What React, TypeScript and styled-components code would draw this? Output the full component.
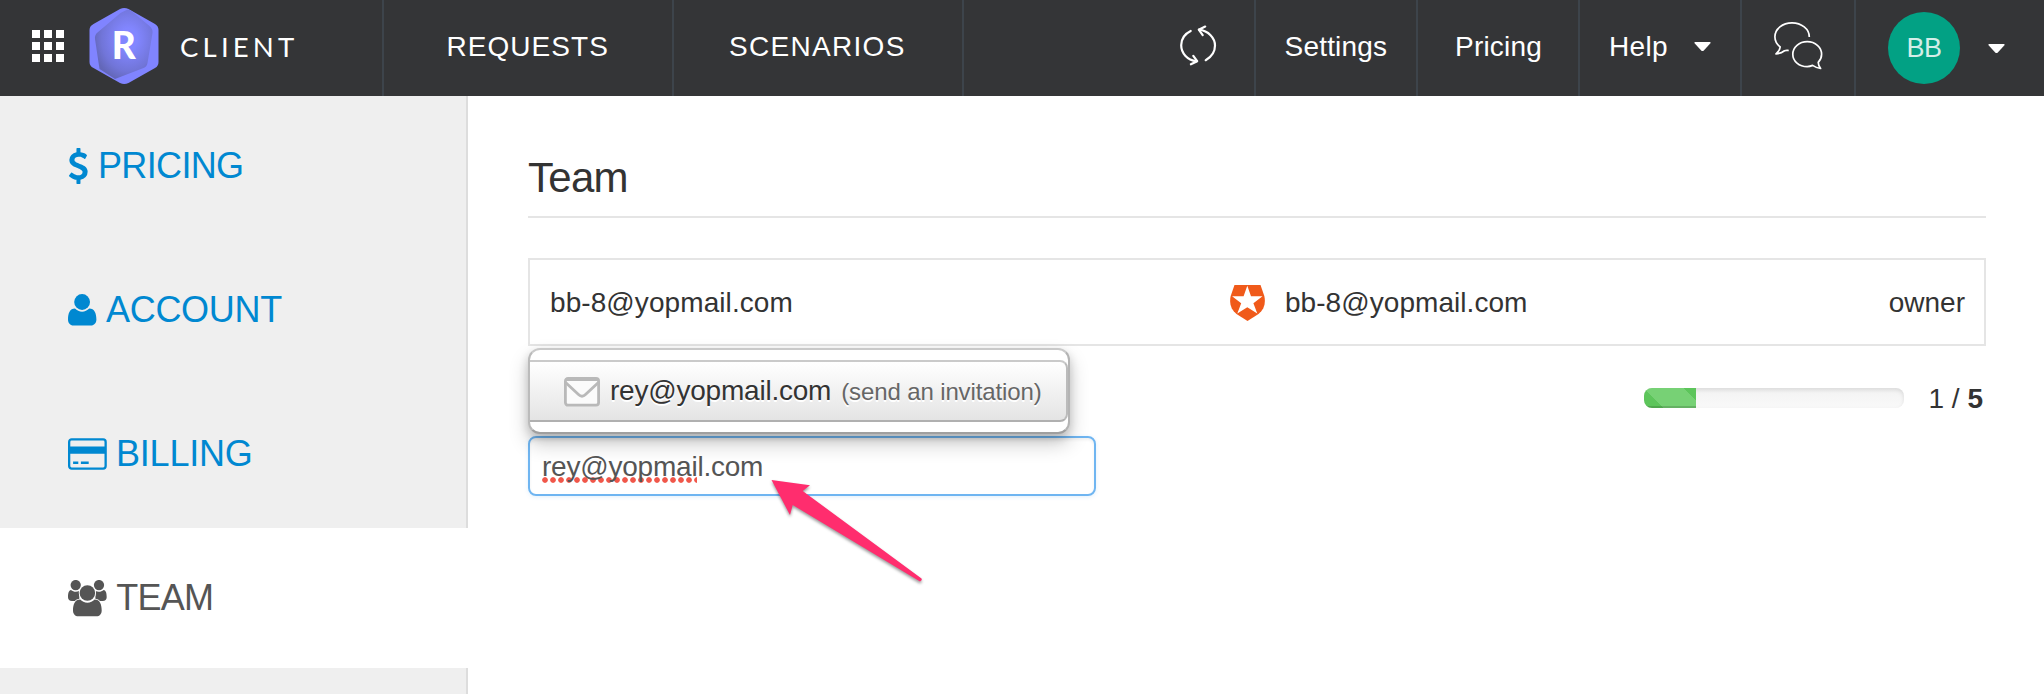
import React from "react";
import styled, { createGlobalStyle } from "styled-components";

const GlobalStyle = createGlobalStyle`
  * { box-sizing: border-box; }
  html, body { margin: 0; padding: 0; }
  body {
    width: 2044px;
    height: 694px;
    overflow: hidden;
    background: #fff;
    color: #333;
    font-family: "Liberation Sans", Arial, sans-serif;
    font-size: 28px;
  }
`;

const Page = styled.div`
  display: flex;
  flex-direction: column;
  height: 694px;
`;

/* ---------- top bar ---------- */

const TopBar = styled.header`
  display: flex;
  flex: 0 0 96px;
  background: #343537;
  color: #fff;
`;

const Cell = styled.div<{ $width: number; $pad?: number; $last?: boolean }>`
  display: flex;
  align-items: center;
  width: ${(p) => p.$width}px;
  padding-left: ${(p) => p.$pad ?? 0}px;
  padding-bottom: 4px;
  border-right: ${(p) => (p.$last ? "none" : "2px solid #3d444b")};
  line-height: 32px;
  white-space: nowrap;
`;

const Spacer = styled.div`
  flex: 1;
`;

const AppGrid = styled.div`
  display: grid;
  grid-template-columns: repeat(3, 8px);
  grid-auto-rows: 8px;
  gap: 4px;
`;

const Dot = styled.span`
  background: #fff;
`;

const Logo = styled.svg`
  display: block;
  margin-left: 25px;
`;

const Brand = styled.span`
  margin: 2px 0 0 21px;
  font-family: Lato, sans-serif;
  font-size: 27.5px;
  letter-spacing: 4.2px;
`;

const NavText = styled.span<{ $spacing: number }>`
  margin-top: 2px;
  letter-spacing: ${(p) => p.$spacing}px;
`;

const Icon = styled.svg`
  display: block;
  flex: none;
`;

const HelpCaret = styled(Icon)`
  margin-left: 26px;
`;

const UserCaret = styled(Icon)`
  margin: 5px 0 0 28px;
`;

const Avatar = styled.div`
  display: flex;
  align-items: center;
  justify-content: center;
  width: 72px;
  height: 72px;
  margin-top: 4px;
  border-radius: 50%;
  background: #02a184;
  color: #d3eee8;
  font-size: 27px;
  letter-spacing: -0.5px;
`;

/* ---------- side menu ---------- */

const Body = styled.div`
  display: flex;
  flex: 1;
`;

const Sidebar = styled.nav`
  display: flex;
  flex: 0 0 468px;
  flex-direction: column;
  gap: 4px;
  background: linear-gradient(90deg, #efefef 466px, #ddd 466px);
`;

const MenuItem = styled.a<{ $active?: boolean; $spacing: number }>`
  display: flex;
  flex: 0 0 140px;
  align-items: center;
  gap: 9.5px;
  padding-left: 68px;
  background: ${(p) => (p.$active ? "#fff" : "transparent")};
  color: ${(p) => (p.$active ? "#555" : "#0088d1")};
  font-size: 36px;
  letter-spacing: ${(p) => p.$spacing}px;
  line-height: 40px;
`;

/* ---------- content ---------- */

const Content = styled.main`
  flex: 1;
  padding: 56px 58px 0 60px;
`;

const Title = styled.h1`
  height: 66px;
  margin: 0 0 40px;
  border-bottom: 2px solid #e5e5e5;
  font-size: 42px;
  font-weight: 400;
  letter-spacing: -0.7px;
  line-height: 52px;
`;

const MemberRow = styled.div`
  display: flex;
  align-items: center;
  height: 88px;
  padding: 2px 19px 0 20px;
  border: 2px solid #e5e5e5;
`;

const MemberMail = styled.span`
  width: 680px;
  letter-spacing: 0.08px;
`;

const MemberAccount = styled.span`
  display: flex;
  flex: 1;
  align-items: center;
  gap: 20px;
  letter-spacing: 0.05px;
`;

const BelowRow = styled.div`
  display: flex;
  align-items: flex-start;
  justify-content: space-between;
  padding-top: 2px;
`;

const InviteColumn = styled.div`
  position: relative;
  display: flex;
  flex-direction: column;
  gap: 2px;
  width: 568px;
`;

const Suggestions = styled.div`
  z-index: 1;
  width: 542px;
  height: 86px;
  padding: 10px 0;
  border: 2px solid;
  border-color: #c9c9c9 #b4b4b4 #9f9f9f #bbb;
  border-radius: 12px;
  background: #fff;
  box-shadow: 0 10px 20px rgba(0, 0, 0, 0.2), 0 4px 10px rgba(0, 0, 0, 0.16);
`;

const Suggestion = styled.div`
  display: flex;
  align-items: center;
  height: 62px;
  padding: 1px 0 0 34px;
  border: 2px solid;
  border-color: #cacaca #bbb #b0b0b0;
  border-left: 0;
  border-radius: 0 8px 8px 0;
  background: linear-gradient(#fff, #e4e4e4);
  text-shadow: 0 2px 0 #fff;
  letter-spacing: -0.22px;
  white-space: nowrap;
`;

const SuggestedMail = styled.span`
  margin: -1px 10px 0 10px;
`;

const Hint = styled.small`
  margin-top: 1px;
  color: #666;
  font-size: 24px;
  letter-spacing: -0.12px;
`;

const MailField = styled.div`
  display: flex;
  align-items: center;
  height: 60px;
  padding: 1px 0 0 12px;
  border: 2px solid #6fb5f1;
  border-radius: 8px;
  box-shadow: inset 0 2px 3px rgba(0, 0, 0, 0.06), 0 1px 4px rgba(110, 180, 240, 0.2);
  color: #555;
  letter-spacing: -0.22px;
`;

const Misspelled = styled.span`
  background: radial-gradient(circle at 3px 3px, #f0574a 2.4px, rgba(255, 100, 90, 0) 3.2px) left bottom / 8px 6px repeat-x;
`;

const Pointer = styled.svg`
  position: absolute;
  z-index: 2;
  left: 236px;
  top: 124px;
`;

const Seats = styled.div`
  display: flex;
  align-items: center;
  gap: 25px;
  padding: 29px 3px 0 0;
`;

const Meter = styled.div`
  width: 260px;
  height: 20px;
  margin-top: 4px;
  overflow: hidden;
  border-radius: 8px;
  background: linear-gradient(#f3f3f3, #f9f9f9);
  box-shadow: inset 0 2px 4px rgba(0, 0, 0, 0.11);
`;

const MeterFill = styled.div`
  height: 20px;
  background: linear-gradient(45deg, #5dc55b 13.5px, #77d175 13.5px, #77d175 42px, #5dc55b 42px);
  box-shadow: inset 0 -2px 0 rgba(0, 0, 0, 0.15);
`;

const Count = styled.span`
  margin-top: 6px;
  line-height: 32px;
`;

/* ---------- drawings ---------- */

const LogoMark = () => (
  <Logo width="70" height="78" viewBox="88.5 7 70 78">
    <defs>
      <radialGradient id="gem" cx="0.58" cy="0.42" r="0.62">
        <stop offset="0.25" stopColor="#8286ff" />
        <stop offset="0.75" stopColor="#7175d8" />
        <stop offset="1" stopColor="#6367b8" />
      </radialGradient>
    </defs>
    <path
      d="M119.5 9Q123.7 6.8 128 9L154.500 24Q158 26 158 30V62Q158 66 154.500 68L128 83Q123.700 85.200 119.500 83L93 68Q89 66 89 62V30Q89 26 93 24Z"
      fill="#8084ff"
    />
    <path
      d="M125 10.500Q128 9 131 11L149 26Q152.500 29 152 33L147 63Q146.300 67 143 68L114.500 79L99 69L94.500 39Q94 35 97 32.500L120 13Z"
      fill="url(#gem)"
    />
    <text x="111.300" y="59.300" fill="#fff" fontFamily="Lato, sans-serif" fontSize="37" fontWeight="900">
      R
    </text>
  </Logo>
);

const Refresh = () => (
  <Icon width="38" height="42" viewBox="0 0 38 42" fill="none" stroke="#fff" strokeWidth="2.200" strokeLinecap="round" strokeLinejoin="round">
    <path d="M10.700 6C4.500 9 1.200 14.500 1.200 20.300C1.200 28 7 35 16.500 36.200" />
    <path d="M13.300 30.800L17.200 36.200L10.900 39.300" />
    <path d="M25.700 35.200C31.500 32 35 26.500 35 20.600C35 13 28.500 5.800 19 4.700" />
    <path d="M22.700 10.200L18.800 4.700L25.200 1.600" />
  </Icon>
);

const Chats = () => (
  <Icon width="50" height="49" viewBox="0 0 50 49" fill="none" stroke="#fff" strokeWidth="1.700" strokeLinejoin="round">
    <path d="M35.300 15C35.300 7 27.500 0.900 18 0.900S0.900 7 0.900 14.800C0.900 19 2.800 22.300 6.200 25C6 28 4.500 29.800 2 31.900C6 31.600 8.500 30.300 10.500 28.800C12 28.300 13 28.600 14.700 28.300" />
    <path d="M44.200 40.300C46.400 38.100 47.600 35.300 47.600 32.200C47.600 25.100 41.200 19.700 33.200 19.700S18.800 25.100 18.800 32.200S25.200 44.600 33.200 44.600C35.200 44.600 36.800 44.200 38.600 43.400C41 45 43.500 46 46.600 46.500C45 44.300 44.200 42.600 44.200 40.300Z" />
  </Icon>
);

const CaretShape = () => (
  <path d="M1.200 0H15.800Q17.200 0.300 16.200 1.600L9.800 8.400Q8.500 9.600 7.200 8.400L0.800 1.600Q-0.200 0.300 1.200 0Z" fill="#fff" />
);

const Dollar = () => (
  <Icon width="20.500" height="36" viewBox="384 0 1020 1792" fill="currentColor">
    <path d="M1362 1185q0 153-99.500 263.500t-258.500 136.500v175q0 14-9 23t-23 9h-135q-13 0-22.500-9.500t-9.500-22.500v-175q-66-9-127.500-31t-101.500-44.500-74-48-46.500-37.500-17.500-18q-17-21-2-41l103-135q7-10 23-12 15-2 24 9l2 2q113 99 243 125 37 8 74 8 81 0 142.500-43t61.500-122q0-28-15-53t-33.500-42-58.500-37.500-66-32-80-32.500q-39-16-61.500-25t-61.500-26.500-62.500-31-56.500-35.500-53.500-42.500-43.500-49-35.500-58-21-66.500-8.500-78q0-138 98-242t255-134v-180q0-13 9.500-22.500t22.500-9.500h135q14 0 23 9t9 23v176q57 6 110.500 23t87 33.500 63.500 37.500 39 29 15 14q17 18 5 38l-81 146q-8 15-23 16-14 3-27-7-3-3-14.500-12t-39-26.500-58.500-32-74.500-26-85.500-11.500q-95 0-155 43t-60 111q0 26 8.500 48t29.500 41.500 39.500 33 56 31 60.500 27 70 27.500q53 20 81 31.500t76 35 75.500 42.500 62 50 53 63.500 31.500 76.500 13 94z" />
  </Icon>
);

const Person = () => (
  <Icon width="28.500" height="32" viewBox="0 0 28.500 32" fill="currentColor">
    <circle cx="14.100" cy="8" r="7.900" />
    <path d="M7 14.600C8.800 16.700 11.500 17.700 14.100 17.700S19.400 16.700 21.200 14.600C26.500 14.600 28.400 19.500 28.400 25.500C28.400 29 26 31.500 23 31.500H5.300C2.300 31.500 0 29 0 25.500C0 19.500 1.800 14.600 7 14.600Z" />
  </Icon>
);

const Card = () => (
  <Icon width="38.600" height="32" viewBox="0 0 38.600 32" fill="currentColor">
    <rect x="1.150" y="1.400" width="36.500" height="29.200" rx="2.500" fill="none" stroke="currentColor" strokeWidth="2.300" />
    <path d="M1 8.500H38V15.800H1ZM5.100 23.500H10.300V26H5.100ZM12.900 23.500H20.700V26H12.900Z" />
  </Icon>
);

const People = () => (
  <Icon width="38.800" height="37" viewBox="0 0 38.800 37" fill="currentColor">
    <circle cx="7.700" cy="5.100" r="5.150" />
    <circle cx="31" cy="5.100" r="5.150" />
    <path d="M3 10C4.500 11.200 6 11.800 7.800 11.800C9 11.800 10 11.600 11.300 11V21H4C1.500 21 0 19.600 0 17.200C0 13.500 0.700 10.200 3 10Z" />
    <path d="M35.700 10C34.200 11.200 32.700 11.800 30.900 11.800C29.700 11.800 28.700 11.600 27.400 11V21H34.700C37.200 21 38.700 19.600 38.700 17.200C38.700 13.500 38 10.200 35.700 10Z" />
    <g stroke="#fff" strokeWidth="1.800" paintOrder="stroke">
      <path d="M12.200 19.600C14 21.600 16.500 22.700 19.400 22.700S24.800 21.600 26.600 19.600C31.800 19.600 33.700 24.500 33.700 30.500C33.700 34 31.500 36.300 28.500 36.300H10.300C7.300 36.300 5 34 5 30.500C5 24.500 7 19.600 12.200 19.600Z" />
      <circle cx="19.400" cy="12.900" r="7.750" />
    </g>
  </Icon>
);

const Shield = () => (
  <Icon width="35" height="36" viewBox="0 0 35 36">
    <path d="M4.500 0H30.500L34.300 11C36 18.500 34 24.500 28.500 29L17.500 36L6.500 29C1 24.500 -1 18.500 0.700 11Z" fill="#f05a1a" />
    <path d="M17.300 0.800L21 11.200H32.500L23.400 18.200L27.300 28.600L17.300 22.300L7.300 28.600L11.200 18.200L2.100 11.200H13.600Z" fill="#fff" />
  </Icon>
);

const Envelope = () => (
  <Icon width="36" height="30" viewBox="0 0 36 30" fill="none" stroke="#b9b9b9" strokeWidth="2.800">
    <rect x="1.400" y="1.400" width="33.200" height="26.800" rx="2.600" fill="#fbfbfb" />
    <path d="M1.600 5.500L14.500 17.500Q18 21 21.500 17.500L34.400 5.500" />
    <path d="M1.600 2.600H34.400" strokeWidth="3" />
  </Icon>
);

const members = [{ mail: "bb-8@yopmail.com", account: "bb-8@yopmail.com", role: "owner" }];
const seatsUsed = 1;
const seatsTotal = 5;

export default function App() {
  return (
    <Page>
      <GlobalStyle />
      <TopBar>
        <Cell $width={384} $pad={32}>
          <AppGrid>
            {Array.from({ length: 9 }, (_, i) => (
              <Dot key={i} />
            ))}
          </AppGrid>
          <LogoMark />
          <Brand>CLIENT</Brand>
        </Cell>
        <Cell $width={290} $pad={62.5}>
          <NavText $spacing={1.05}>REQUESTS</NavText>
        </Cell>
        <Cell $width={290} $pad={55}>
          <NavText $spacing={1.3}>SCENARIOS</NavText>
        </Cell>
        <Spacer />
        <Cell $width={76}>
          <Refresh />
        </Cell>
        <Cell $width={162} $pad={28.5}>
          <NavText $spacing={0.2}>Settings</NavText>
        </Cell>
        <Cell $width={162} $pad={37}>
          <NavText $spacing={0.2}>Pricing</NavText>
        </Cell>
        <Cell $width={162} $pad={29}>
          <NavText $spacing={0.3}>Help</NavText>
          <HelpCaret width="17" height="9" viewBox="0 0 17 9">
            <CaretShape />
          </HelpCaret>
        </Cell>
        <Cell $width={114} $pad={32}>
          <Chats />
        </Cell>
        <Cell $width={188} $pad={32} $last>
          <Avatar>BB</Avatar>
          <UserCaret width="17" height="9" viewBox="0 0 17 9">
            <CaretShape />
          </UserCaret>
        </Cell>
      </TopBar>
      <Body>
        <Sidebar>
          <MenuItem $spacing={-0.65}>
            <Dollar />
            PRICING
          </MenuItem>
          <MenuItem $spacing={-0.3}>
            <Person />
            ACCOUNT
          </MenuItem>
          <MenuItem $spacing={-0.25}>
            <Card />
            BILLING
          </MenuItem>
          <MenuItem $spacing={-0.8} $active>
            <People />
            TEAM
          </MenuItem>
        </Sidebar>
        <Content>
          <Title>Team</Title>
          {members.map((m) => (
            <MemberRow key={m.mail}>
              <MemberMail>{m.mail}</MemberMail>
              <MemberAccount>
                <Shield />
                {m.account}
              </MemberAccount>
              <span>{m.role}</span>
            </MemberRow>
          ))}
          <BelowRow>
            <InviteColumn>
              <Suggestions>
                <Suggestion>
                  <Envelope />
                  <SuggestedMail>rey@yopmail.com</SuggestedMail>
                  <Hint>(send an invitation)</Hint>
                </Suggestion>
              </Suggestions>
              <MailField>
                <Misspelled>rey@yopmai</Misspelled>
                <span>l.com</span>
              </MailField>
              <Pointer width="170" height="120" viewBox="764 472 170 120">
                <path
                  d="M771.500 480L810 485.300L802.700 491L921.500 578.500Q922.500 580.500 920 581.500L792.700 505L790 515Z"
                  fill="#ff2d6e"
                  filter="drop-shadow(0 2px 1.500px rgba(0,0,0,0.4))"
                />
              </Pointer>
            </InviteColumn>
            <Seats>
              <Meter>
                <MeterFill style={{ width: `${(seatsUsed / seatsTotal) * 100}%` }} />
              </Meter>
              <Count>
                {seatsUsed} / <b>{seatsTotal}</b>
              </Count>
            </Seats>
          </BelowRow>
        </Content>
      </Body>
    </Page>
  );
}
